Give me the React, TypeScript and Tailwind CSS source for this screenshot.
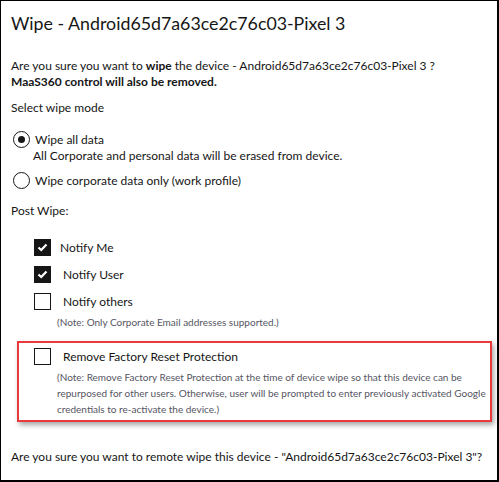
import React from "react";

const font = { fontFamily: "Lato, 'Noto Sans', sans-serif" };

function CheckBox({ checked }: { checked?: boolean }) {
  return checked ? (
    <span className="flex h-[17px] w-[17px] shrink-0 items-center justify-center bg-[#161616]">
      <svg width="11" height="9" viewBox="0 0 11 9" fill="none">
        <path d="M1.5 4.5 L4.2 7 L9.5 1.5" stroke="white" strokeWidth="2.2" />
      </svg>
    </span>
  ) : (
    <span className="h-[17px] w-[17px] shrink-0 border border-[#161616] bg-white" />
  );
}

function Radio({ checked }: { checked?: boolean }) {
  return (
    <span className="flex h-[17px] w-[17px] shrink-0 items-center justify-center rounded-full border border-[#161616] bg-white">
      {checked && <span className="h-[7px] w-[7px] rounded-full bg-[#161616]" />}
    </span>
  );
}

export default function App() {
  return (
    <div
      className="h-[482px] w-[499px] overflow-hidden border-t border-l border-r-2 border-b-2 border-black bg-white text-[#161616]"
      style={font}
    >
      <div className="px-[10px] pt-[9px] text-[12px] leading-[16px]">
        <h1 className="text-[17.8px] leading-[26px] font-normal">
          Wipe - Android65d7a63ce2c76c03-Pixel 3
        </h1>

        <p className="mt-[22px]">
          Are you sure you want to <b className="font-bold">wipe</b> the device - Android65d7a63ce2c76c03-Pixel 3 ?
        </p>
        <p className="font-bold">MaaS360 control will also be removed.</p>

        <p className="mt-[10px]">Select wipe mode</p>

        <div className="mt-[15px] flex items-center gap-[5px] pl-[2px]">
          <Radio checked />
          <span>Wipe all data</span>
        </div>
        <p className="pl-[22px]">All Corporate and personal data will be erased from device.</p>
        <div className="mt-[8px] flex items-center gap-[5px] pl-[2px]">
          <Radio />
          <span>Wipe corporate data only (work profile)</span>
        </div>

        <p className="mt-[14px]">Post Wipe:</p>

        <div className="mt-[20px] flex flex-col gap-[10px] pl-[23px]">
          <div className="flex items-center gap-[9px]">
            <CheckBox checked />
            <span>Notify Me</span>
          </div>
          <div className="flex items-center gap-[12px]">
            <CheckBox checked />
            <span>Notify User</span>
          </div>
          <div className="flex items-center gap-[12px]">
            <CheckBox />
            <span>Notify others</span>
          </div>
        </div>
        <p className="mt-[4px] pl-[46px] text-[10px] leading-[16px] text-[#55555f]">
          (Note: Only Corporate Email addresses supported.)
        </p>

        <div className="mt-[11px] ml-[6px] w-[475px] border-2 border-[#e83a3a] pt-[5px] pb-[3px] shadow-[2px_3px_5px_rgba(0,0,0,0.35)]">
          <div className="flex items-center gap-[12px] pl-[15px]">
            <CheckBox />
            <span>Remove Factory Reset Protection</span>
          </div>
          <p className="mt-[4px] pl-[38px] text-[10px] leading-[16px] text-[#55555f]">
            (Note: Remove Factory Reset Protection at the time of device wipe so that this device can be
            repurposed for other users. Otherwise, user will be prompted to enter previously activated Google
            credentials to re-activate the device.)
          </p>
        </div>

        <p className="mt-[27px]">
          Are you sure you want to remote wipe this device - "Android65d7a63ce2c76c03-Pixel 3"?
        </p>
      </div>
    </div>
  );
}
